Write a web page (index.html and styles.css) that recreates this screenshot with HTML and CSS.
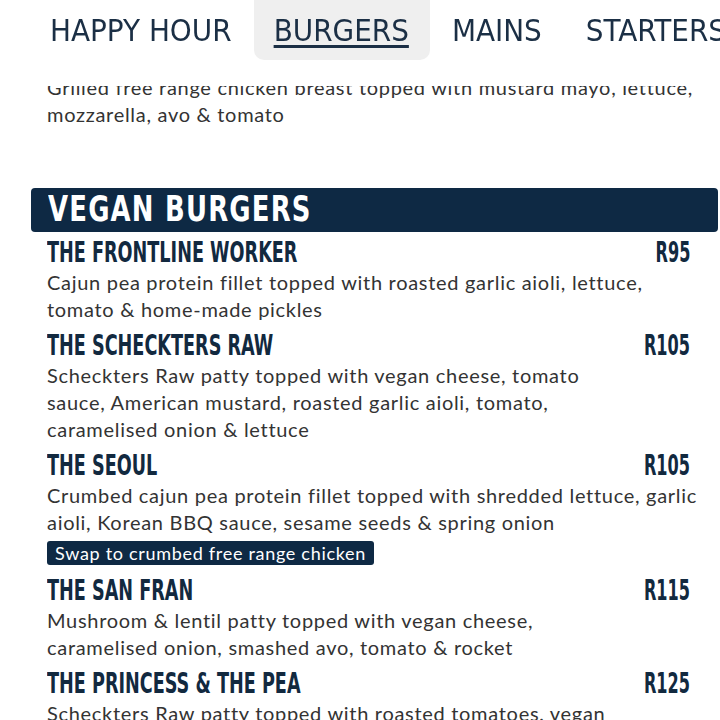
FILE: index.html
```html
<!DOCTYPE html>
<html lang="en">
<head>
    <meta charset="UTF-8">
    <meta name="viewport" content="width=device-width, initial-scale=1.0">
    <title>Burgers - Menu</title>
    <link rel="stylesheet" href="styles.css">
</head>
<body>
    <nav class="tabs">
        <a class="tab" href="#">HAPPY HOUR</a>
        <a class="tab active" href="#">BURGERS</a>
        <a class="tab" href="#">MAINS</a>
        <a class="tab" href="#">STARTERS</a>
    </nav>

    <main class="menu">
        <section class="menu-section first">
            <div class="item">
                <p class="item-desc">Grilled free range chicken breast topped with mustard mayo, lettuce,<br>mozzarella, avo &amp; tomato</p>
            </div>
        </section>

        <section class="menu-section">
            <h2 class="section-title"><span>VEGAN BURGERS</span></h2>

            <div class="item">
                <div class="item-head">
                    <span class="item-name">THE FRONTLINE WORKER</span>
                    <span class="item-price">R95</span>
                </div>
                <p class="item-desc">Cajun pea protein fillet topped with roasted garlic aioli, lettuce,<br>tomato &amp; home-made pickles</p>
            </div>

            <div class="item">
                <div class="item-head">
                    <span class="item-name">THE SCHECKTERS RAW</span>
                    <span class="item-price">R105</span>
                </div>
                <p class="item-desc">Scheckters Raw patty topped with vegan cheese, tomato<br>sauce, American mustard, roasted garlic aioli, tomato,<br>caramelised onion &amp; lettuce</p>
            </div>

            <div class="item">
                <div class="item-head">
                    <span class="item-name">THE SEOUL</span>
                    <span class="item-price">R105</span>
                </div>
                <p class="item-desc">Crumbed cajun pea protein fillet topped with shredded lettuce, garlic<br>aioli, Korean BBQ sauce, sesame seeds &amp; spring onion</p>
                <span class="item-extra">Swap to crumbed free range chicken</span>
            </div>

            <div class="item">
                <div class="item-head">
                    <span class="item-name">THE SAN FRAN</span>
                    <span class="item-price">R115</span>
                </div>
                <p class="item-desc">Mushroom &amp; lentil patty topped with vegan cheese,<br>caramelised onion, smashed avo, tomato &amp; rocket</p>
            </div>

            <div class="item">
                <div class="item-head">
                    <span class="item-name">THE PRINCESS &amp; THE PEA</span>
                    <span class="item-price">R125</span>
                </div>
                <p class="item-desc">Scheckters Raw patty topped with roasted tomatoes, vegan<br>cheese, rocket &amp; basil pesto</p>
            </div>
        </section>
    </main>
</body>
</html>
```

FILE: styles.css
```css
html, body {
    margin: 0;
    overflow: hidden;
}
body {
    font-family: Lato, "Open Sans", sans-serif;
    color: #333;
    background: #fff;
}
.tabs {
    position: fixed;
    top: 0;
    left: 0;
    right: 0;
    height: 86px;
    background: #fff;
    display: flex;
    padding-left: 28px;
    white-space: nowrap;
    z-index: 2;
}
.tab {
    display: block;
    height: 60px;
    padding: 0 22px;
    line-height: 60px;
    font-family: "DejaVu Sans Condensed", "DejaVu Sans", sans-serif;
    font-stretch: semi-condensed;
    font-size: 31px;
    color: #1b2f45;
    text-decoration: none;
    border-radius: 0 0 10px 10px;
}
.tab.active {
    background: #efefef;
    padding: 0 21px 0 20px;
    text-decoration: underline;
    text-decoration-thickness: 3px;
    text-underline-offset: 4px;
}
.menu {
    padding: 74px 2px 0 31px;
}
.menu-section.first {
    margin-bottom: 54px;
}
.section-title {
    margin: 0 0 4px;
    height: 44px;
    line-height: 42px;
    padding-left: 17px;
    background: #0e2944;
    border-radius: 4px;
    color: #fff;
    font-family: "DejaVu Sans Condensed", "DejaVu Sans", sans-serif;
    font-size: 36px;
    font-weight: bold;
    white-space: nowrap;
    overflow: hidden;
}
.section-title span {
    display: inline-block;
    letter-spacing: 1.5px;
    transform: scaleX(0.8);
    transform-origin: left center;
}
.item {
    padding: 0 28px 6px 16px;
}
.item-head {
    display: flex;
    justify-content: space-between;
    height: 33px;
    line-height: 33px;
    font-family: "DejaVu Sans Condensed", "DejaVu Sans", sans-serif;
    font-size: 28px;
    font-weight: bold;
    color: #12293f;
    white-space: nowrap;
}
.item-name {
    display: inline-block;
    transform: scaleX(0.7);
    transform-origin: left center;
}
.item-price {
    display: inline-block;
    transform: scaleX(0.64);
    transform-origin: right center;
}
.item-desc {
    margin: 0;
    font-size: 20px;
    line-height: 27px;
    letter-spacing: 0.7px;
    white-space: nowrap;
}
.item-extra {
    display: block;
    width: fit-content;
    margin: 5px 0 3px;
    padding: 0 8px;
    height: 24px;
    line-height: 24px;
    background: #0e2944;
    border-radius: 3px;
    color: #fff;
    font-size: 18px;
    letter-spacing: 0.7px;
}
```
